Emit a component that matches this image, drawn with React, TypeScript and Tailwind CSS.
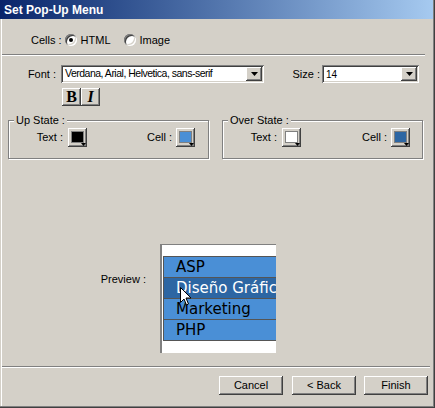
import React from 'react';

const raised =
  'bg-[#d4d0c8] shadow-[inset_-1px_-1px_#404040,inset_1px_1px_#ffffff,inset_-2px_-2px_#808080,inset_2px_2px_#d4d0c8]';
const sunken =
  'bg-white shadow-[inset_1px_1px_#808080,inset_-1px_-1px_#ffffff,inset_2px_2px_#404040,inset_-2px_-2px_#d4d0c8]';

function Radio({ checked }: { checked?: boolean }) {
  return (
    <span className="relative inline-flex w-[12px] h-[12px] rounded-full bg-white shadow-[inset_1px_1px_#808080,inset_-1px_-1px_#ffffff,inset_2px_2px_#404040,inset_-2px_-2px_#d4d0c8] items-center justify-center">
      {checked && <span className="w-[4px] h-[4px] rounded-full bg-black" />}
    </span>
  );
}

function Select({ value, width, small }: { value: string; width: string; small?: boolean }) {
  return (
    <div className={`${sunken} ${width} h-[18px] flex items-center p-[2px]`}>
      <span className={`flex-1 pl-[2px] whitespace-nowrap overflow-hidden ${small ? 'text-[10.5px] tracking-[-0.5px]' : 'text-[10px]'}`}>
        {value}
      </span>
      <span className={`${raised} w-[16px] h-[14px] flex items-center justify-center`}>
        <svg width="7" height="4" viewBox="0 0 7 4">
          <path d="M0 0h7L3.5 4z" fill="#000" />
        </svg>
      </span>
    </div>
  );
}

function Swatch({ color }: { color: string }) {
  return (
    <span className={`${raised} relative inline-block w-[19px] h-[19px]`}>
      <span
        className="absolute left-[3px] top-[3px] w-[13px] h-[12px] border border-[#808080]"
        style={{ backgroundColor: color }}
      />
      <svg className="absolute right-[1px] bottom-[1px]" width="5" height="3" viewBox="0 0 5 3">
        <path d="M0 0h5L2.5 3z" fill="#000" />
      </svg>
    </span>
  );
}

function Group({ title, children }: { title: string; children: React.ReactNode }) {
  return (
    <div className="relative w-[201px] h-[39px] border border-[#808080] shadow-[inset_1px_1px_#ffffff,1px_1px_#ffffff] flex items-start pt-[7px]">
      <span className="absolute -top-[7px] left-[5px] px-[2px] bg-[#d4d0c8] leading-[13px]">{title}</span>
      {children}
    </div>
  );
}

function Btn({ label, className = '' }: { label: string; className?: string }) {
  return (
    <button type="button" className={`${raised} w-[64px] h-[19px] text-[11px] flex items-center justify-center ${className}`}>
      {label}
    </button>
  );
}

const items = ['ASP', 'Diseño Gráfico', 'Marketing', 'PHP'];

export default function App() {
  return (
    <div className="w-[435px] h-[408px] border-r border-b border-[#404040] bg-[#d4d0c8] font-['Liberation_Sans',Arial,sans-serif] text-[11px] text-black">
      <div className="h-full flex flex-col border-r border-b border-[#808080]">
        <div className="h-[19px] shrink-0 bg-gradient-to-r from-[#0a246a] to-[#a6caf0] flex items-center pl-[4px]">
          <span className="text-white font-bold text-[12px] leading-none">Set Pop-Up Menu</span>
        </div>
        <div className="flex-1 flex flex-col ml-px border-l border-white">
          {/* Cells */}
          <div className="mt-[13px] h-[16px] flex items-center pl-[29px]">
            <span>Cells :</span>
            <span className="ml-[3px] flex"><Radio checked /></span>
            <span className="ml-[4px]">HTML</span>
            <span className="ml-[13px] flex"><Radio /></span>
            <span className="ml-[4px]">Image</span>
          </div>
          <div className="mt-[6px] ml-0 w-[423px] h-[2px] border-t border-[#808080] border-b border-b-white" />

          {/* Font row */}
          <div className="mt-[9px] h-[18px] flex items-center">
            <span className="w-[59px] text-right pr-[5px]">Font :</span>
            <Select value="Verdana, Arial, Helvetica, sans-serif" width="w-[203px]" small />
            <span className="w-[58px] text-right pr-[2px]">Size :</span>
            <Select value="14" width="w-[97px]" />
          </div>

          {/* Bold / Italic */}
          <div className="mt-[5px] flex pl-[60px]">
            <span className={`${raised} w-[19px] h-[18px] flex items-center justify-center font-['Liberation_Serif',serif] font-bold text-[16px] leading-none`}>
              B
            </span>
            <span className={`${raised} w-[19px] h-[18px] flex items-center justify-center font-['Liberation_Serif',serif] font-bold italic text-[16px] leading-none`}>
              I
            </span>
          </div>

          {/* States */}
          <div className="mt-[14px] flex pl-[6px] gap-[13px]">
            <Group title="Up State :">
              <span className="w-[54px] text-right leading-[19px]">Text :</span>
              <span className="ml-[5px] flex"><Swatch color="#000000" /></span>
              <span className="w-[85px] text-right leading-[19px]">Cell :</span>
              <span className="ml-[4px] flex"><Swatch color="#4a8fd6" /></span>
            </Group>
            <Group title="Over State :">
              <span className="w-[54px] text-right leading-[19px]">Text :</span>
              <span className="ml-[5px] flex"><Swatch color="#ffffff" /></span>
              <span className="w-[86px] text-right leading-[19px]">Cell :</span>
              <span className="ml-[4px] flex"><Swatch color="#2d66a3" /></span>
            </Group>
          </div>

          {/* Preview */}
          <div className="mt-[85px] flex items-start">
            <span className="w-[144px] text-right mt-[27px]">Preview :</span>
            <div className="relative ml-[14px] w-[116px] h-[109px] bg-white border-l-2 border-t border-[#808080] overflow-hidden pt-[11px] pl-px">
              <div className="w-[150px] border-l border-b border-[#555555] font-['DejaVu_Sans',Verdana,sans-serif] text-[15px]">
                {items.map((it, i) => (
                  <div
                    key={it}
                    className={`h-[21px] border-t border-[#555555] pl-[12px] leading-[20px] whitespace-nowrap ${
                      i === 1 ? 'bg-[#2d66a3] text-white' : 'bg-[#4a8fd6] text-black'
                    }`}
                  >
                    {it}
                  </div>
                ))}
              </div>
              <svg className="absolute left-[18px] top-[42px]" width="12" height="19" viewBox="0 0 12 19">
                <path d="M0.5 0.5v15l3.5-3.5 2.5 6 2-1-2.5-6h5z" fill="#fff" stroke="#000" strokeWidth="1" />
              </svg>
            </div>
          </div>

          {/* Bottom */}
          <div className="mt-[13px] w-[428px] h-[2px] border-t border-[#808080] border-b border-b-white" />
          <div className="mt-[8px] flex pl-[217px]">
            <Btn label="Cancel" />
            <Btn label="< Back" className="ml-[9px]" />
            <Btn label="Finish" className="ml-[8px]" />
          </div>
        </div>
      </div>
    </div>
  );
}
